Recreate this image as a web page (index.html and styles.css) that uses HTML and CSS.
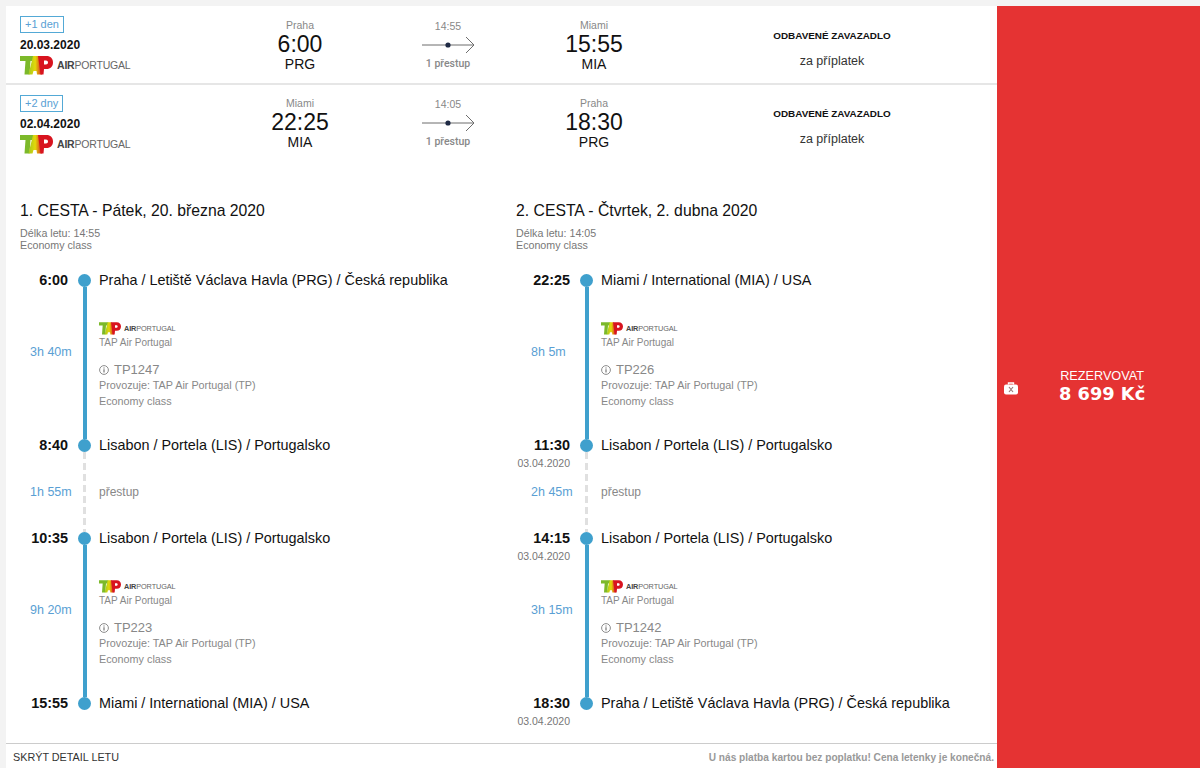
FILE: index.html
```html
<!DOCTYPE html>
<html lang="cs">
<head>
  <meta charset="UTF-8">
  <title>Detail letu</title>
  <link rel="stylesheet" href="styles.css">
</head>
<body>
  <svg class="defs" width="0" height="0">
    <defs>
      <linearGradient id="tap-a" x1="0" x2="1" y1="0" y2="0">
        <stop offset="0" stop-color="#a5c81e"/>
        <stop offset="0.5" stop-color="#e2d90a"/>
        <stop offset="1" stop-color="#d9261c"/>
      </linearGradient>
      <symbol id="tap-mark" viewBox="0 0 33 19">
        <path fill="#7cb92a" d="M0 0H14V5H10.5L9.5 18.5H4.5L5.5 5H0Z"/>
        <path fill="url(#tap-a)" d="M13 0H19L22 18.5H17L16.5 15H13.5L12.5 18.5H8.5Z"/>
        <path fill="#d8141f" fill-rule="evenodd" d="M18 0H26.5C30.5 0 33 2.5 33 6.5S30.5 13 26.5 13H24L23.5 18.5H20.5ZM24 4.5V8.5H26C27.2 8.5 28 7.7 28 6.5S27.2 4.5 26 4.5Z"/>
      </symbol>
    </defs>
  </svg>

  <div class="page">
    <main class="card">
      <section class="summary">
        <div class="info">
          <span class="badge">+1 den</span>
          <div class="date">20.03.2020</div>
          <div class="logo"><svg class="mark"><use href="#tap-mark"/></svg><span class="logo-text"><b>AIR</b>PORTUGAL</span></div>
        </div>
        <div class="place"><div class="city">Praha</div><div class="clock">6:00</div><div class="code">PRG</div></div>
        <div class="trip">
          <div class="trip-time">14:55</div>
          <svg class="arrow" width="54" height="18" viewBox="0 0 54 18"><path d="M1 9H53M45 1L53 9L45 17" fill="none" stroke="#6d6d6d"/><circle cx="27" cy="9" r="2.6" fill="#1f2a44"/></svg>
          <div class="trip-stops">1 přestup</div>
        </div>
        <div class="place"><div class="city">Miami</div><div class="clock">15:55</div><div class="code">MIA</div></div>
        <div class="bag"><div class="bag-title">ODBAVENÉ ZAVAZADLO</div><div class="bag-note">za příplatek</div></div>
      </section>

      <section class="summary">
        <div class="info">
          <span class="badge">+2 dny</span>
          <div class="date">02.04.2020</div>
          <div class="logo"><svg class="mark"><use href="#tap-mark"/></svg><span class="logo-text"><b>AIR</b>PORTUGAL</span></div>
        </div>
        <div class="place"><div class="city">Miami</div><div class="clock">22:25</div><div class="code">MIA</div></div>
        <div class="trip">
          <div class="trip-time">14:05</div>
          <svg class="arrow" width="54" height="18" viewBox="0 0 54 18"><path d="M1 9H53M45 1L53 9L45 17" fill="none" stroke="#6d6d6d"/><circle cx="27" cy="9" r="2.6" fill="#1f2a44"/></svg>
          <div class="trip-stops">1 přestup</div>
        </div>
        <div class="place"><div class="city">Praha</div><div class="clock">18:30</div><div class="code">PRG</div></div>
        <div class="bag"><div class="bag-title">ODBAVENÉ ZAVAZADLO</div><div class="bag-note">za příplatek</div></div>
      </section>

      <section class="details">
        <div class="leg leg-out">
          <h2>1. CESTA - Pátek, 20. března 2020</h2>
          <p class="meta">Délka letu: 14:55<br>Economy class</p>
          <div class="timeline">
            <div class="row stop">
              <div class="time">6:00</div>
              <div class="rail"><span class="dot"></span></div>
              <div class="where">Praha / Letiště Václava Havla (PRG) / Česká republika</div>
            </div>
            <div class="row flight">
              <div class="dur">3h 40m</div>
              <div class="rail"><span class="line"></span></div>
              <div class="flight-info">
                <div class="logo logo-small"><svg class="mark"><use href="#tap-mark"/></svg><span class="logo-text"><b>AIR</b>PORTUGAL</span></div>
                <div class="carrier">TAP Air Portugal</div>
                <div class="number"><svg class="i-icon" width="10" height="10" viewBox="0 0 10 10"><circle cx="5" cy="5" r="4.4" fill="none" stroke="#8c8c8c"/><path d="M5 2.4V3.4M5 4.3V7.6" stroke="#777" stroke-width="1.2"/></svg>TP1247</div>
                <div class="small">Provozuje: TAP Air Portugal (TP)</div>
                <div class="small">Economy class</div>
              </div>
            </div>
            <div class="row stop">
              <div class="time">8:40</div>
              <div class="rail"><span class="dot"></span></div>
              <div class="where">Lisabon / Portela (LIS) / Portugalsko</div>
            </div>
            <div class="row transfer">
              <div class="dur">1h 55m</div>
              <div class="rail"><span class="dash"></span></div>
              <div class="transfer-text">přestup</div>
            </div>
            <div class="row stop">
              <div class="time">10:35</div>
              <div class="rail"><span class="dot"></span></div>
              <div class="where">Lisabon / Portela (LIS) / Portugalsko</div>
            </div>
            <div class="row flight">
              <div class="dur">9h 20m</div>
              <div class="rail"><span class="line"></span></div>
              <div class="flight-info">
                <div class="logo logo-small"><svg class="mark"><use href="#tap-mark"/></svg><span class="logo-text"><b>AIR</b>PORTUGAL</span></div>
                <div class="carrier">TAP Air Portugal</div>
                <div class="number"><svg class="i-icon" width="10" height="10" viewBox="0 0 10 10"><circle cx="5" cy="5" r="4.4" fill="none" stroke="#8c8c8c"/><path d="M5 2.4V3.4M5 4.3V7.6" stroke="#777" stroke-width="1.2"/></svg>TP223</div>
                <div class="small">Provozuje: TAP Air Portugal (TP)</div>
                <div class="small">Economy class</div>
              </div>
            </div>
            <div class="row stop">
              <div class="time">15:55</div>
              <div class="rail"><span class="dot"></span></div>
              <div class="where">Miami / International (MIA) / USA</div>
            </div>
          </div>
        </div>

        <div class="leg leg-back">
          <h2>2. CESTA - Čtvrtek, 2. dubna 2020</h2>
          <p class="meta">Délka letu: 14:05<br>Economy class</p>
          <div class="timeline">
            <div class="row stop">
              <div class="time">22:25</div>
              <div class="rail"><span class="dot"></span></div>
              <div class="where">Miami / International (MIA) / USA</div>
            </div>
            <div class="row flight">
              <div class="dur">8h 5m</div>
              <div class="rail"><span class="line"></span></div>
              <div class="flight-info">
                <div class="logo logo-small"><svg class="mark"><use href="#tap-mark"/></svg><span class="logo-text"><b>AIR</b>PORTUGAL</span></div>
                <div class="carrier">TAP Air Portugal</div>
                <div class="number"><svg class="i-icon" width="10" height="10" viewBox="0 0 10 10"><circle cx="5" cy="5" r="4.4" fill="none" stroke="#8c8c8c"/><path d="M5 2.4V3.4M5 4.3V7.6" stroke="#777" stroke-width="1.2"/></svg>TP226</div>
                <div class="small">Provozuje: TAP Air Portugal (TP)</div>
                <div class="small">Economy class</div>
              </div>
            </div>
            <div class="row stop">
              <div class="time">11:30<div class="time-date">03.04.2020</div></div>
              <div class="rail"><span class="dot"></span></div>
              <div class="where">Lisabon / Portela (LIS) / Portugalsko</div>
            </div>
            <div class="row transfer">
              <div class="dur">2h 45m</div>
              <div class="rail"><span class="dash"></span></div>
              <div class="transfer-text">přestup</div>
            </div>
            <div class="row stop">
              <div class="time">14:15<div class="time-date">03.04.2020</div></div>
              <div class="rail"><span class="dot"></span></div>
              <div class="where">Lisabon / Portela (LIS) / Portugalsko</div>
            </div>
            <div class="row flight">
              <div class="dur">3h 15m</div>
              <div class="rail"><span class="line"></span></div>
              <div class="flight-info">
                <div class="logo logo-small"><svg class="mark"><use href="#tap-mark"/></svg><span class="logo-text"><b>AIR</b>PORTUGAL</span></div>
                <div class="carrier">TAP Air Portugal</div>
                <div class="number"><svg class="i-icon" width="10" height="10" viewBox="0 0 10 10"><circle cx="5" cy="5" r="4.4" fill="none" stroke="#8c8c8c"/><path d="M5 2.4V3.4M5 4.3V7.6" stroke="#777" stroke-width="1.2"/></svg>TP1242</div>
                <div class="small">Provozuje: TAP Air Portugal (TP)</div>
                <div class="small">Economy class</div>
              </div>
            </div>
            <div class="row stop">
              <div class="time">18:30<div class="time-date">03.04.2020</div></div>
              <div class="rail"><span class="dot"></span></div>
              <div class="where">Praha / Letiště Václava Havla (PRG) / Česká republika</div>
            </div>
          </div>
        </div>
      </section>

      <footer class="foot">
        <a class="foot-link" href="#">SKRÝT DETAIL LETU</a>
        <span class="foot-note">U nás platba kartou bez poplatku! Cena letenky je konečná.</span>
      </footer>
    </main>

    <aside class="book">
      <svg class="bag-icon" width="14" height="13" viewBox="0 0 14 13">
        <path d="M4.5 2.5V1H9.500V2.500" fill="none" stroke="#fff" stroke-width="1.400"/>
        <rect x="0" y="2.500" width="14" height="10" rx="2" fill="#fff"/>
        <path d="M5 5L9 10M9 5L5 10" stroke="#9a7a7a" stroke-width="1.200"/>
      </svg>
      <a class="book-btn" href="#">
        <span class="book-label">REZERVOVAT</span>
        <span class="book-price">8 699 Kč</span>
      </a>
    </aside>
  </div>
</body>
</html>
```

FILE: styles.css
```css
* {
  box-sizing: border-box;
  margin: 0;
  padding: 0;
}
html, body {
  height: 100%;
  overflow: hidden;
}
body {
  background: #f3f3f3;
  color: #111;
  font-family: "Liberation Sans", Arial, sans-serif;
}
a {
  color: inherit;
  text-decoration: none;
}
.defs {
  display: block;
  height: 0;
}
.page {
  display: flex;
  height: 762px;
  margin: 6px 0 0 6px;
}

/* levy blok */
.card {
  display: flex;
  flex-direction: column;
  width: 991px;
  background: #fff;
}
.summary {
  display: grid;
  grid-template-columns: 220px 120px 176px 116px 1fr;
  height: 79px;
  padding: 10px 0 0 14px;
  border-bottom: 2px solid #e6e6e6;
}
.summary + .summary {
  height: 78px;
  padding-top: 9px;
  border-bottom: 0;
}
.summary + .summary .badge {
  margin-top: 1px;
}
.info {
  display: flex;
  flex-direction: column;
  align-items: flex-start;
}
.badge {
  height: 17px;
  padding: 0 4px;
  border: 1px solid #53a9d6;
  color: #5a9fd4;
  font-size: 11px;
  line-height: 15px;
}
.date {
  margin-top: 5px;
  font-size: 12px;
  font-weight: 700;
  line-height: 15px;
}
.logo {
  display: flex;
  align-items: center;
  margin-top: 3px;
}
.mark {
  width: 33px;
  height: 19px;
}
.logo-text {
  margin: -1px 0 0 4px;
  color: #666;
  font-size: 10.500px;
  letter-spacing: -0.200px;
}
.logo-text b {
  color: #444;
}
.place {
  padding-top: 3px;
  text-align: center;
}
.city {
  color: #888;
  font-size: 10.500px;
  line-height: 13px;
}
.clock {
  font-size: 23px;
  line-height: 25px;
}
.code {
  font-size: 14px;
  line-height: 15px;
}
.trip {
  padding-top: 4px;
  text-align: center;
  color: #888;
  font-size: 10.500px;
  line-height: 13px;
}
.arrow {
  display: block;
  margin: 3px auto 3px;
}
.trip-stops {
  font-family: Roboto, sans-serif;
  font-weight: 500;
}
.bag {
  padding: 13px 0 0 15px;
  text-align: center;
}
.bag-title {
  font-size: 9.900px;
  font-weight: 700;
  line-height: 14px;
}
.bag-note {
  margin-top: 11px;
  color: #333;
  font-size: 12.500px;
  line-height: 15px;
}

/* detail letu */
.details {
  display: grid;
  grid-template-columns: 496px 1fr;
  padding: 38px 0 0 14px;
}
.leg h2 {
  font-size: 15.750px;
  font-weight: 400;
  line-height: 20px;
}
.meta {
  margin-top: 6px;
  color: #777;
  font-size: 10.700px;
  line-height: 12px;
}
.timeline {
  margin-top: 23px;
}
.row {
  display: grid;
  grid-template-columns: var(--time-w) 31px 1fr;
}
.leg-out {
  --time-w: 49px;
  --dur-x: 10px;
}
.leg-back {
  --time-w: 55px;
  --dur-x: 15px;
}
.rail {
  display: flex;
  justify-content: center;
}
.dot {
  width: 13px;
  height: 13px;
  border-radius: 50%;
  background: #3fa0cd;
}
.line {
  width: 4px;
  background: #3fa0cd;
}
.dash {
  width: 3px;
  background: repeating-linear-gradient(#e0e0e0 0 7px, transparent 7px 11px);
}
.stop {
  height: 13px;
}
.time {
  height: 13px;
  padding-right: 1px;
  font-size: 14.400px;
  font-weight: 700;
  line-height: 13px;
  text-align: right;
  white-space: nowrap;
}
.time-date {
  margin-top: 5px;
  color: #777;
  font-size: 10.500px;
  font-weight: 400;
  line-height: 13px;
}
.where {
  margin-left: -1px;
  font-size: 14.400px;
  line-height: 13px;
  white-space: nowrap;
}
.flight {
  height: 152px;
}
.transfer {
  height: 80px;
}
.dur {
  align-self: center;
  padding-left: var(--dur-x);
  color: #5a9fd4;
  font-size: 12.500px;
  white-space: nowrap;
}
.flight .dur {
  margin-bottom: 22px;
}
.flight-info {
  margin-left: -1px;
  padding-top: 35px;
  color: #888;
}
.logo-small {
  margin-top: 0;
}
.logo-small .mark {
  width: 22px;
  height: 13px;
}
.logo-small .logo-text {
  margin: 0 0 0 3px;
  font-size: 7.300px;
  letter-spacing: -0.100px;
}
.carrier {
  margin-top: 1px;
  font-size: 10px;
  line-height: 14px;
}
.number {
  display: flex;
  align-items: center;
  margin-top: 12px;
  color: #888;
  font-size: 13px;
  line-height: 15px;
}
.i-icon {
  margin-right: 5px;
}
.small {
  font-size: 10.800px;
  line-height: 16px;
}
.transfer-text {
  align-self: center;
  margin-left: -1px;
  color: #888;
  font-size: 12px;
}

/* paticka */
.foot {
  display: flex;
  align-items: center;
  justify-content: space-between;
  height: 25px;
  margin-top: auto;
  padding: 2px 3px 0 7px;
  border-top: 1px solid #ccc;
}
.foot-link {
  color: #333;
  font-size: 10.800px;
}
.foot-note {
  color: #999;
  font-size: 10.150px;
  font-weight: 700;
}

/* cervene tlacitko */
.book {
  display: flex;
  flex: 1;
  align-items: center;
  padding: 0 0 0 7px;
  background: #e53333;
  color: #fff;
}
.bag-icon {
  margin-top: 3px;
}
.book-btn {
  display: flex;
  flex-direction: column;
  align-items: center;
  margin: -4px 0 0 41px;
}
.book-label {
  font-size: 12.700px;
  line-height: 17px;
}
.book-price {
  font-family: "DejaVu Sans", sans-serif;
  font-size: 17.800px;
  font-weight: 700;
  line-height: 18px;
}
```
